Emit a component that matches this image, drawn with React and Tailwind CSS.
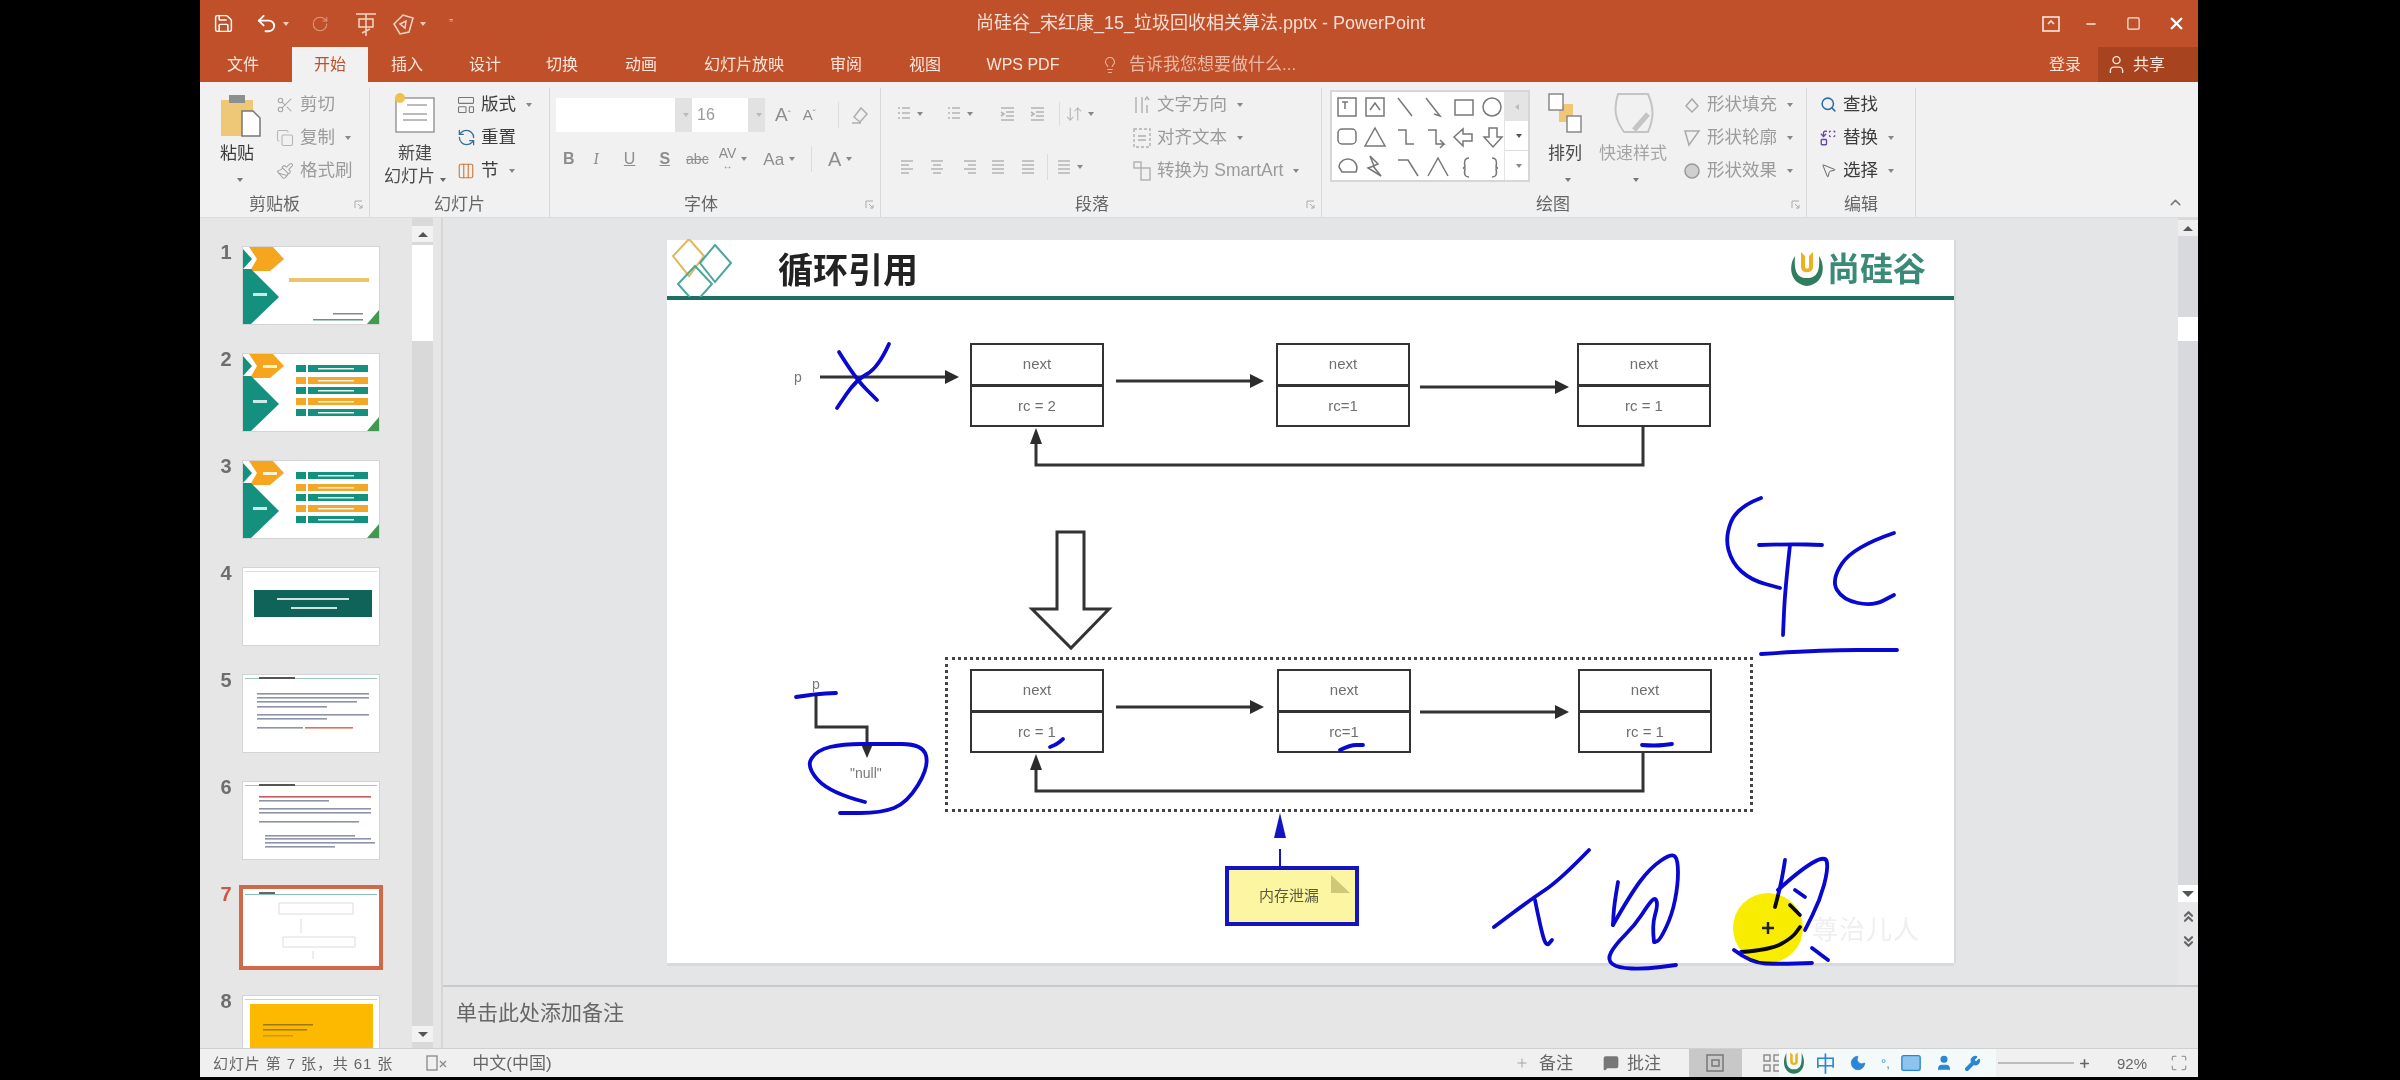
import React from 'react';
import { Save, Undo2, RotateCw, Scissors, Copy, Paintbrush, Lightbulb, User, Search, Replace, MousePointer2, ChevronUp, ChevronsUp, ChevronsDown, Plus, Minus, X, Square, LayoutTemplate, RefreshCcw, Columns3, Keyboard, Wrench, Moon, MessageSquare, ArrowDownUp, Maximize } from 'lucide-react';

const smooth = (pts) => {
  let d = `M${pts[0][0]} ${pts[0][1]}`;
  for (let i = 1; i < pts.length - 1; i++) {
    const mx = (pts[i][0] + pts[i + 1][0]) / 2;
    const my = (pts[i][1] + pts[i + 1][1]) / 2;
    d += ` Q${pts[i][0]} ${pts[i][1]} ${mx} ${my}`;
  }
  const l = pts[pts.length - 1];
  return d + ` L${l[0]} ${l[1]}`;
};

const INK = [
  [[889,344],[878,368],[856,380],[837,408]],
  [[839,352],[855,378],[877,400]],
  [[796,697],[815,694],[836,693]],
  [[865,802],[830,793],[806,767],[817,750],[843,744],[880,744],[923,744],[929,767],[907,803],[881,813],[840,813]],
  [[1050,747],[1056,745],[1063,739]],
  [[1340,750],[1350,745],[1363,745]],
  [[1642,745],[1655,746],[1672,744]],
  [[1761,498],[1737,507],[1725,537],[1732,563],[1751,580],[1780,588]],
  [[1759,545],[1790,544],[1822,545]],
  [[1790,545],[1785,590],[1783,635]],
  [[1894,533],[1853,547],[1831,580],[1843,600],[1873,606],[1894,595]],
  [[1761,654],[1819,650],[1897,650]],
  [[1589,850],[1560,880],[1530,900],[1494,927]],
  [[1535,900],[1540,925],[1546,947],[1552,940]],
  [[1618,882],[1614,905],[1613,925]],
  [[1613,925],[1630,895],[1650,868],[1672,853],[1678,860],[1678,885],[1672,915],[1660,940],[1655,942]],
  [[1654,942],[1652,925],[1658,905],[1655,897],[1648,905],[1635,925],[1615,945],[1607,960],[1618,968],[1645,969],[1676,965]],
  [[1785,860],[1782,880],[1775,907]],
  [[1778,890],[1800,870],[1826,855],[1828,870],[1820,900],[1805,930]],
  [[1795,890],[1805,897]],
  [[1790,905],[1800,915]],
  [[1741,952],[1770,950],[1792,938],[1800,927]],
  [[1734,950],[1751,963],[1780,964],[1812,963]],
  [[1812,948],[1828,960]],
];

const Box = ({ pos, rc }) => (
  <div className={`absolute w-[134px] h-[84px] border-2 border-[#333] bg-white flex flex-col text-[15px] text-[#6e6e6e] ${pos}`}>
    <div className="flex-1 flex items-center justify-center border-b-[3px] border-[#333]">next</div>
    <div className="flex-1 flex items-center justify-center">{rc}</div>
  </div>
);

const Slide = () => (
  <div className="relative w-[1287px] h-[723px] bg-white shrink-0 shadow-[0_3px_0_#d9d9d9,2px_0_0_#d9d9d9]">
    <div className="h-[60px] border-b-4 border-[#1d6f61] flex items-center">
      <svg width="70" height="58" viewBox="667 240 70 58" className="shrink-0" fill="none" strokeWidth="2">
        <path d="M689 240 L704 257 L689 277 L673 257 Z" stroke="#e3b75a" />
        <path d="M715 246 L731 264 L715 283 L700 264 Z" stroke="#4aa79a" />
        <path d="M695 267 L712 285 L695 304 L678 285 Z" stroke="#4aa79a" />
      </svg>
      <div className="ml-[41px] mt-[4px] text-[35px] font-bold text-[#222] leading-none">循环引用</div>
      <div className="ml-auto mr-[28px] mt-[2px] flex items-center gap-[1px]">
        <svg width="38" height="38" viewBox="0 0 38 38" fill="none">
          <path d="M7 6 C0 16 2 34 19 36 C36 34 38 16 31 6 C32 20 30 28 19 28 C8 28 6 20 7 6 Z" fill="#2f7d5e" />
          <path d="M13 2 L13 17 C13 24 25 24 25 17 L25 2 L21 6 L21 17 C21 19 17 19 17 17 L17 6 Z" fill="#eeb021" />
        </svg>
        <span className="text-[33px] font-bold text-[#3b8a78] leading-none">尚硅谷</span>
      </div>
    </div>

    <Box pos="left-[303px] top-[103px]" rc="rc = 2" />
    <Box pos="left-[609px] top-[103px]" rc="rc=1" />
    <Box pos="left-[910px] top-[103px]" rc="rc = 1" />
    <Box pos="left-[303px] top-[429px]" rc="rc = 1" />
    <Box pos="left-[610px] top-[429px]" rc="rc=1" />
    <Box pos="left-[911px] top-[429px]" rc="rc = 1" />

    <div className="absolute left-[278px] top-[417px] w-[808px] h-[155px] border-[3px] border-dotted border-[#444]" />
    <span className="absolute left-[127px] top-[127px] text-[14px] text-[#777]">p</span>
    <span className="absolute left-[145px] top-[434px] text-[14px] text-[#777]">p</span>
    <span className="absolute left-[183px] top-[523px] text-[14px] text-[#777]">"null"</span>

    <div className="absolute left-[558px] top-[626px] w-[134px] h-[60px] border-4 border-[#1414c0] bg-[#fcf6a2] flex items-center justify-center text-[15px] text-[#5a5a3a]">
      <span className="mr-[6px]">内存泄漏</span>
    </div>
    <div className="absolute left-[1145px] top-[677px] text-[26px] tracking-[1px] text-[#efefef] leading-none">尊治儿人</div>

    <svg className="absolute inset-0 overflow-visible" width="1288" height="723" viewBox="667 240 1288 723" fill="none">
      <g stroke="#333" strokeWidth="3">
        <path d="M820 377 H948" /><path d="M1116 381 H1253" /><path d="M1420 387 H1558" />
        <path d="M1643 427 V465 H1036 V438" />
        <path d="M1116 707 H1253" /><path d="M1420 712 H1558" />
        <path d="M1643 753 V791 H1036 V764" />
        <path d="M816 695 V727 H867 V745" />
        <path d="M1057 609 V532 H1084 V609 H1109 L1071 648 L1032 609 Z" fill="#fff" />
      </g>
      <g fill="#2c2c2c">
        <path d="M959 377 L945 370 V384 Z" /><path d="M1264 381 L1250 374 V388 Z" /><path d="M1569 387 L1555 380 V394 Z" />
        <path d="M1264 707 L1250 700 V714 Z" /><path d="M1569 712 L1555 705 V719 Z" />
        <path d="M1036 428 L1030 444 H1042 Z" /><path d="M1036 754 L1030 770 H1042 Z" />
        <path d="M867 758 L861 744 H873 Z" />
      </g>
      <path d="M1331 875 L1350 893 H1331 Z" fill="#cfc878" />
      <path d="M1280 813 L1274 838 H1286 Z" fill="#1414c0" />
      <path d="M1280 849 V866" stroke="#1414c0" strokeWidth="2" />
      <g stroke="#0808d0" strokeWidth="3.8" strokeLinecap="round" strokeLinejoin="round">
        {INK.map((p, i) => <path key={i} d={smooth(p)} />)}
      </g>
      <circle cx="1768" cy="928" r="35" fill="#f8ec00" className="mix-blend-multiply" />
      <path d="M1762 928 H1774 M1768 922 V934" stroke="#222" strokeWidth="2.5" />
    </svg>
  </div>
);

const Corner = () => (
  <g>
    <path d="M124 77 L136 63 V77 Z" fill="#3f9a4f" />
  </g>
);
const Arrowhead = () => (
  <g>
    <path d="M0 0 H30 L41 12 L27 24 H7 L14 12 L6 0 Z" fill="#f5a51e" />
    <path d="M0 2 L9 12 L0 22 Z" fill="#14907f" />
    <path d="M0 22 H8 L36 50 L8 77 H0 Z" fill="#14907f" />
    <rect x="10" y="46" width="14" height="3" fill="#cfe9e4" />
  </g>
);
const Rows = () => (
  <g>
    {[11, 23, 33, 44, 55].map((y, i) => (
      <g key={y}>
        <rect x="53" y={y} width="10" height="7" fill={i % 2 ? '#f2a728' : '#14907f'} />
        <rect x="65" y={y} width="60" height="7" fill={i % 2 ? '#f2a728' : '#14907f'} />
        <rect x="75" y={y + 3} width="36" height="1.5" fill="#e8f3ee" />
      </g>
    ))}
  </g>
);
const Lines = ({ rows }) => (
  <g>
    <rect x="2" y="3" width="132" height="1" fill="#9cc9bf" />
    <rect x="16" y="2" width="36" height="2" fill="#555" />
    {rows.map((r, i) => <rect key={i} x={r[0]} y={r[1]} width={r[2]} height="1.6" fill={r[3] || '#8e93a8'} />)}
  </g>
);

const THUMBS = [
  <g key="1"><Arrowhead /><rect x="46" y="31" width="80" height="4" fill="#edc46a" /><rect x="90" y="66" width="30" height="1.5" fill="#888" /><rect x="70" y="72" width="50" height="1.5" fill="#5a9a80" /><Corner /></g>,
  <g key="2"><Arrowhead /><rect x="20" y="11" width="14" height="3" fill="#fff3d6" /><Rows /><Corner /></g>,
  <g key="3"><Arrowhead /><rect x="20" y="11" width="14" height="3" fill="#fff3d6" /><Rows /><Corner /></g>,
  <g key="4"><rect x="2" y="3" width="132" height="1" fill="#cfe4df" /><rect x="11" y="22" width="118" height="27" fill="#0f6358" /><rect x="34" y="30" width="72" height="2" fill="#cfe4df" /><rect x="48" y="39" width="46" height="2" fill="#cfe4df" /></g>,
  <Lines key="5" rows={[[14,18,112],[14,22,112],[14,26,100],[14,31,70],[14,39,112],[14,43,70],[14,52,46],[62,52,48,'#e0705a']]} />,
  <Lines key="6" rows={[[16,14,112,'#cc5a62'],[16,18,70],[16,26,112],[16,30,112],[16,39,100],[22,53,90],[22,56,106],[22,60,110],[22,64,70]]} />,
  <g key="7"><rect x="2" y="5" width="132" height="1" fill="#8cc0b5" /><rect x="16" y="3" width="16" height="2" fill="#666" /><path d="M36 14 H110 M36 25 H110 M40 48 H112 M40 58 H112 M36 14 V25 M110 14 V25 M40 48 V58 M112 48 V58 M58 30 V44 M70 62 V70" stroke="#dcdcdc" strokeWidth="1" fill="none" /></g>,
  <g key="8"><rect x="2" y="3" width="132" height="1" fill="#bcd8d0" /><rect x="7" y="8" width="123" height="69" fill="#fdb900" /><rect x="20" y="28" width="50" height="1.5" fill="#9a7a10" /><rect x="20" y="33" width="44" height="1.5" fill="#9a7a10" /><rect x="20" y="39" width="30" height="1.5" fill="#c7981a" /></g>,
];

const ThumbPanel = () => (
  <div className="w-[243px] h-full flex bg-[#e6e6e6] border-r-2 border-[#d6d6d6] shrink-0">
    <div className="w-[212px] h-full overflow-hidden pt-[29px]">
      {THUMBS.map((t, i) => (
        <div key={i} className="h-[107px] flex pl-[17px]">
          <div className={`w-[26px] -mt-[5px] text-[20px] font-bold leading-none pr-[8px] text-center ${i === 6 ? 'text-[#c9583c]' : 'text-[#6e6e6e]'}`}>{i + 1}</div>
          <svg width="136" height="77" viewBox="0 0 136 77" className={`bg-white shrink-0 ${i === 6 ? 'outline-4 outline-[#d0694a]' : 'outline-1 outline-[#d4d4d4]'}`}>{t}</svg>
        </div>
      ))}
    </div>
    <div className="w-[21px] h-full bg-[#d9d9d9] flex flex-col pt-[8px] pb-[6px]">
      <div className="h-[16px] bg-[#f2f2f2] flex items-center justify-center"><div className="w-0 h-0 border-x-[5px] border-x-transparent border-b-[5px] border-b-[#555]" /></div>
      <div className="h-[96px] mt-[3px] bg-white" />
      <div className="flex-1" />
      <div className="h-[16px] bg-[#f2f2f2] flex items-center justify-center"><div className="w-0 h-0 border-x-[5px] border-x-transparent border-t-[5px] border-t-[#555]" /></div>
    </div>
  </div>
);

const Caret = ({ c = 'border-t-[#888]' }) => <span className={`inline-block w-0 h-0 border-x-[3px] border-x-transparent border-t-[4px] ${c} ml-[5px]`} />;

const Small = ({ icon, text, caret, dark }) => (
  <div className={`h-[33px] flex items-center gap-[5px] text-[17.5px] leading-none whitespace-nowrap ${dark ? 'text-[#3c3c3c]' : 'text-[#9b9b9b]'}`}>
    <span className="w-[20px] flex justify-center shrink-0">{icon}</span>
    <span>{text}</span>
    {caret && <Caret />}
  </div>
);

const Group = ({ w, label, children, launcher, lw = '' }) => (
  <div className={`${w} h-full shrink-0 flex flex-col border-r border-[#d8d8d8] relative`}>
    <div className="h-[102px] flex">{children}</div>
    <div className={`flex-1 flex items-center justify-center text-[17px] text-[#666] leading-none pt-[2px] ${lw}`}>{label}</div>
    {launcher && <svg className="absolute right-[6px] bottom-[8px]" width="9" height="9" viewBox="0 0 9 9" fill="none" stroke="#aaa"><path d="M1 8 V1 H8 M4 4 L8 8 M8 5 V8 H5" /></svg>}
  </div>
);

const Big = ({ w, ml, icon, l1, l2, caret, c = 'text-[#4a4a4a]' }) => (
  <div className={`${w} ${ml} flex flex-col items-center text-[17px] leading-none ${c}`}>
    <div className="h-[50px] flex items-start justify-center pt-[4px]">{icon}</div>
    <div className="mt-[7px]">{l1}</div>
    {l2 && <div className="mt-[6px] whitespace-nowrap">{l2}{caret && <Caret c="border-t-[#666]" />}</div>}
    {!l2 && caret && <div className="mt-[6px]"><Caret c="border-t-[#777]" /></div>}
  </div>
);

const LinesIcon = ({ kind }) => {
  const map = {
    left: 'M1 2 H13 M1 6 H9 M1 10 H13 M1 14 H9',
    center: 'M1 2 H13 M3 6 H11 M1 10 H13 M3 14 H11',
    right: 'M1 2 H13 M5 6 H13 M1 10 H13 M5 14 H13',
    just: 'M1 2 H13 M1 6 H13 M1 10 H13 M1 14 H13',
    bullet: 'M1 2 H3 M5 2 H13 M1 7 H3 M5 7 H13 M1 12 H3 M5 12 H13',
    indent: 'M1 2 H14 M6 6 H14 M6 10 H14 M1 14 H14 M1 6 L4 8 L1 10',
  };
  return <svg width="16" height="16" viewBox="0 0 14 16" fill="none" stroke="#b4b4b4" strokeWidth="1.6"><path d={map[kind]} /></svg>;
};

const ic = { size: 18, strokeWidth: 1.4 };

const Gallery = () => (
  <div className="w-[200px] h-[92px] mt-[2px] ml-[8px] flex border-2 border-[#d6d6d6] bg-white shrink-0">
    <svg width="172" height="88" viewBox="0 0 172 88" fill="none" stroke="#777" strokeWidth="1.5" className="shrink-0">
      <rect x="6" y="6" width="18" height="18" /><path d="M10 10 H16 M13 10 V17" />
      <rect x="34" y="6" width="18" height="18" /><path d="M38 18 L43 11 L48 18" />
      <path d="M66 6 L80 24 M94 6 L108 24 L102 22" />
      <rect x="123" y="8" width="18" height="15" />
      <circle cx="160" cy="15" r="9" />
      <rect x="6" y="37" width="18" height="15" rx="4" />
      <path d="M43 36 L53 54 H33 Z" />
      <path d="M66 38 H74 V52 H82 M96 38 H104 V52 H112 L108 48 M108 56 L112 52" />
      <path d="M122 45 L131 37 V42 H140 V49 H131 V54 Z" />
      <path d="M157 36 H165 V45 H170 L161 55 L152 45 H157 Z" />
      <path d="M7 75 A9 9 0 1 1 24 80 H10 Z" />
      <path d="M38 64 L46 72 L41 74 L49 84 L36 76 L42 74 Z" />
      <path d="M66 68 H76 L86 84 M96 84 L106 66 L116 84" />
      <path d="M137 66 Q131 66 133 75 Q130 76 133 77 Q131 85 137 85 M160 66 Q166 66 164 75 Q167 76 164 77 Q166 85 160 85" />
    </svg>
    <div className="flex-1 flex flex-col border-l border-[#e4e4e4] items-center text-[#666]">
      <div className="flex-1 w-full bg-[#e4e4e4] flex items-center justify-center"><div className="w-0 h-0 border-y-[3px] border-y-transparent border-r-[4px] border-r-[#bbb]" /></div>
      <div className="flex-1 w-full flex items-center justify-center"><Caret c="border-t-[#555]" /></div>
      <div className="flex-1 w-full flex items-center justify-center border-t border-[#ddd]"><Caret c="border-t-[#888]" /></div>
    </div>
  </div>
);

const Ribbon = () => (
  <div className="h-[136px] bg-[#f1f1f1] flex pt-[6px] border-b border-[#dcdcdc] shrink-0">
    <Group w="w-[170px]" label="剪贴板" launcher lw="pr-[20px]">
      <Big w="w-[54px]" ml="ml-[10px]" c="text-[#3c3c3c]" l1="粘贴" caret icon={
        <svg className="ml-[8px]" width="42" height="46" viewBox="0 0 42 46" fill="none">
          <rect x="1" y="8" width="32" height="36" fill="#eec877" />
          <rect x="9" y="3" width="16" height="8" fill="#8a8f8f" />
          <path d="M22 19 H33 L40 26 V44 H22 Z" fill="#fff" stroke="#777" strokeWidth="1.5" />
        </svg>
      } />
      <div className="ml-[11px] flex flex-col">
        <Small icon={<Scissors {...ic} color="#a5a5a5" />} text="剪切" />
        <Small icon={<Copy {...ic} color="#b5b5b5" />} text="复制" caret />
        <Small icon={<Paintbrush {...ic} color="#a5a5a5" />} text="格式刷" />
      </div>
    </Group>
    <Group w="w-[180px]" label="幻灯片">
      <Big w="w-[62px]" ml="ml-[14px]" l1="新建" l2="幻灯片" caret icon={
        <svg width="44" height="44" viewBox="0 0 44 44" fill="none">
          <rect x="3" y="6" width="38" height="34" fill="#fff" stroke="#999" strokeWidth="1.5" />
          <path d="M10 22 H34 M10 28 H34 M14 13 H34" stroke="#bbb" strokeWidth="2" />
          <circle cx="7" cy="6" r="5" fill="#f0c24b" />
        </svg>
      } />
      <div className="ml-[10px] flex flex-col">
        <Small dark icon={<LayoutTemplate size={20} strokeWidth={1.3} color="#777" />} text="版式" caret />
        <Small dark icon={<RefreshCcw size={19} strokeWidth={1.6} color="#2f6f9a" />} text="重置" />
        <Small dark icon={<Columns3 size={18} strokeWidth={1.5} color="#c97a3c" />} text="节" caret />
      </div>
    </Group>
    <Group w="w-[331px]" label="字体" launcher lw="pr-[28px]">
      <div className="pl-[6px] pt-[9px] flex flex-col text-[#8d8d8d]">
        <div className="flex items-center h-[35px]">
          <div className="w-[119px] h-[34px] bg-white" />
          <div className="w-[17px] h-[34px] bg-[#e2e2e2] flex items-center justify-center"><Caret c="border-t-[#bbb]" /></div>
          <div className="w-[56px] h-[34px] bg-white pl-[5px] text-[16px] leading-[34px] text-[#9a9a9a]">16</div>
          <div className="w-[17px] h-[34px] bg-[#e2e2e2] flex items-center justify-center"><Caret c="border-t-[#bbb]" /></div>
          <span className="ml-[10px] text-[19px] leading-none">A<sup className="text-[9px]">ˆ</sup></span>
          <span className="ml-[12px] text-[15px] leading-none">A<sup className="text-[9px]">ˇ</sup></span>
          <span className="ml-[22px] w-[1px] h-[26px] bg-[#dcdcdc]" />
          <svg className="ml-[12px]" width="18" height="20" viewBox="0 0 18 20" fill="none" stroke="#b0b0b0" strokeWidth="1.6"><path d="M3 12 L10 3 L16 9 L9 17 Z M1 18 H10" /></svg>
        </div>
        <div className="flex items-center h-[32px] mt-[11px] text-[16px] leading-none">
          <b className="ml-[7px]">B</b>
          <i className="ml-[19px] font-serif">I</i>
          <u className="ml-[25px]">U</u>
          <u className="ml-[24px] font-bold">S</u>
          <s className="ml-[16px] text-[14px]">abc</s>
          <span className="ml-[10px] text-[14px] leading-[11px] text-center">AV<br /><span className="text-[10px]">↔</span></span>
          <Caret />
          <span className="ml-[16px] text-[17px]">Aa</span>
          <Caret />
          <span className="ml-[16px] w-[1px] h-[26px] bg-[#dcdcdc]" />
          <span className="ml-[16px] text-[20px]">A</span>
          <Caret />
        </div>
      </div>
    </Group>
    <Group w="w-[441px]" label="段落" launcher lw="pr-[18px]">
      <div className="pl-[15px] pt-[9px] flex flex-col w-[250px]">
        <div className="flex items-center h-[33px]">
          <LinesIcon kind="bullet" /><Caret />
          <span className="ml-[23px]"><LinesIcon kind="bullet" /></span><Caret />
          <span className="ml-[26px]"><LinesIcon kind="indent" /></span>
          <span className="ml-[14px]"><LinesIcon kind="indent" /></span>
          <span className="ml-[14px] w-[1px] h-[24px] bg-[#dcdcdc]" />
          <ArrowDownUp className="ml-[5px]" size={18} strokeWidth={1.4} color="#b0b0b0" /><Caret />
        </div>
        <div className="flex items-center h-[33px] mt-[20px]">
          <span className="ml-[3px]"><LinesIcon kind="left" /></span>
          <span className="ml-[14px]"><LinesIcon kind="center" /></span>
          <span className="ml-[17px]"><LinesIcon kind="right" /></span>
          <span className="ml-[12px]"><LinesIcon kind="just" /></span>
          <span className="ml-[14px]"><LinesIcon kind="just" /></span>
          <span className="ml-[11px] w-[1px] h-[26px] bg-[#dcdcdc]" />
          <span className="ml-[8px]"><LinesIcon kind="just" /></span><Caret />
        </div>
      </div>
      <div className="flex flex-col ml-[1px]">
        <Small icon={<svg width="18" height="20" viewBox="0 0 18 20" fill="none" stroke="#b0b0b0" strokeWidth="1.4"><path d="M3 2 V18 M9 2 V18 M14 10 V18 M12 5 L14 2 L16 5" /></svg>} text="文字方向" caret />
        <Small icon={<svg width="18" height="20" viewBox="0 0 18 20" fill="none" stroke="#b0b0b0" strokeWidth="1.4"><rect x="1" y="1" width="16" height="18" strokeDasharray="3 2" /><path d="M5 8 H13 M5 12 H13" /></svg>} text="对齐文本" caret />
        <Small icon={<svg width="18" height="20" viewBox="0 0 18 20" fill="none" stroke="#b0b0b0" strokeWidth="1.4"><rect x="1" y="1" width="7" height="6" /><rect x="8" y="7" width="9" height="12" /></svg>} text="转换为 SmartArt" caret />
      </div>
    </Group>
    <Group w="w-[485px]" label="绘图" launcher lw="pr-[22px]">
      <Gallery />
      <Big w="w-[44px]" ml="ml-[13px]" l1="排列" caret icon={
        <svg width="36" height="42" viewBox="0 0 36 42" fill="none">
          <rect x="12" y="12" width="14" height="18" fill="#eec877" />
          <rect x="2" y="2" width="14" height="16" fill="#fff" stroke="#888" strokeWidth="1.5" />
          <rect x="20" y="24" width="14" height="16" fill="#fff" stroke="#888" strokeWidth="1.5" />
        </svg>
      } />
      <Big w="w-[76px]" ml="ml-[8px]" c="text-[#a5a5a5]" l1="快速样式" caret icon={
        <svg width="46" height="44" viewBox="0 0 46 44" fill="none" stroke="#c4c4c4" strokeWidth="2"><path d="M8 2 H38 C44 16 44 26 38 40 H14 C4 26 4 16 8 2 Z" /><path d="M24 38 L38 22" strokeWidth="5" /></svg>
      } />
      <div className="flex flex-col ml-[11px]">
        <Small icon={<svg width="18" height="18" viewBox="0 0 18 18" fill="none" stroke="#aaa" strokeWidth="1.5"><path d="M3 10 L9 3 L15 10 L9 16 Z" /></svg>} text="形状填充" caret />
        <Small icon={<svg width="18" height="18" viewBox="0 0 18 18" fill="none" stroke="#aaa" strokeWidth="1.5"><path d="M2 2 H16 L6 16 Z" /></svg>} text="形状轮廓" caret />
        <Small icon={<svg width="18" height="18" viewBox="0 0 18 18" fill="#cfcfcf" stroke="#999" strokeWidth="1.5"><circle cx="9" cy="9" r="7" /></svg>} text="形状效果" caret />
      </div>
    </Group>
    <Group w="w-[109px]" label="编辑">
      <div className="flex flex-col pl-[11px]">
        <Small dark icon={<Search size={17} strokeWidth={2.2} color="#2b6ca8" />} text="查找" />
        <Small dark icon={<Replace size={18} strokeWidth={1.8} color="#6a4aa0" />} text="替换" caret />
        <Small dark icon={<MousePointer2 size={17} strokeWidth={1.4} color="#666" />} text="选择" caret />
      </div>
    </Group>
    <div className="flex-1 flex items-end justify-end pr-[14px] pb-[6px]"><ChevronUp size={17} color="#777" /></div>
  </div>
);

const TABS = [
  ['w-[76px] ml-[5px]', '文件'], ['w-[76px] ml-[11px]', '开始'], ['w-[78px]', '插入'], ['w-[78px]', '设计'], ['w-[76px]', '切换'], ['w-[82px]', '动画'],
  ['w-[124px]', '幻灯片放映'], ['w-[80px]', '审阅'], ['w-[78px]', '视图'], ['w-[118px]', 'WPS PDF'],
];

const RightScroll = () => (
  <div className="w-[20px] h-full bg-[#e8e8ea] flex flex-col items-center shrink-0">
    <div className="w-full h-[667px] bg-[#d8d9dc] flex flex-col">
      <div className="w-full h-[16px] bg-[#eeeeee] mt-[2px] flex items-center justify-center"><div className="w-0 h-0 border-x-[5px] border-x-transparent border-b-[5px] border-b-[#555]" /></div>
      <div className="w-full h-[24px] mt-[81px] bg-white" />
    </div>
    <div className="w-full h-[17px] bg-white flex items-center justify-center"><div className="w-0 h-0 border-x-[6px] border-x-transparent border-t-[6px] border-t-[#555]" /></div>
    <ChevronsUp className="mt-[6px]" size={17} strokeWidth={3} color="#666" />
    <ChevronsDown className="mt-[8px]" size={17} strokeWidth={3} color="#666" />
  </div>
);

export default function App() {
  return (
    <div className="w-[2400px] h-[1080px] bg-black overflow-hidden font-['Liberation_Sans','Noto_Sans_CJK_SC',sans-serif]">
      <div className="ml-[200px] w-[1998px] h-[1077px] flex flex-col overflow-hidden blur-[0.7px] bg-[#e6e6e6]">
        {/* Title bar */}
        <div className="h-[47px] bg-[#c0502a] flex items-center shrink-0 relative text-[#f7ded4]">
          <Save className="ml-[13px]" size={21} strokeWidth={1.7} color="#fff" />
          <Undo2 className="ml-[21px]" size={23} strokeWidth={2} color="#fff" />
          <Caret c="border-t-[#f3c9b8]" />
          <RotateCw className="ml-[22px]" size={18} strokeWidth={1.4} color="#dd9a80" />
          <svg className="ml-[25px]" width="24" height="26" viewBox="0 0 24 26" fill="none" stroke="#f3d5c8" strokeWidth="1.5"><path d="M2 3 H22 M5 8 H19 V16 H5 Z M12 3 V25 M8 22 L16 18" /></svg>
          <svg className="ml-[13px]" width="24" height="24" viewBox="0 0 24 24" fill="none" stroke="#f3d5c8" strokeWidth="1.5"><path d="M3 12 L12 3 L22 6 L18 20 L9 22 Z M9 12 L15 9 L14 16 Z" /></svg>
          <Caret c="border-t-[#f3c9b8]" />
          <span className="ml-[23px] text-[13px] leading-none text-[#f3c9b8]">⁼</span>
          <div className="absolute left-[776px] top-[14px] text-[18px] leading-none whitespace-nowrap">尚硅谷_宋红康_15_垃圾回收相关算法.pptx - PowerPoint</div>
          <div className="ml-auto flex items-center">
            <svg width="18" height="18" viewBox="0 0 18 18" fill="none" stroke="#fbe6dd" strokeWidth="1.6"><rect x="1" y="2" width="16" height="14" /><path d="M6 9 L9 6 L12 9" /></svg>
            <Minus className="ml-[24px]" size={14} strokeWidth={2.5} color="#fbe6dd" />
            <Square className="ml-[28px]" size={15} strokeWidth={2} color="#fbe6dd" />
            <X className="ml-[26px] mr-[12px]" size={19} strokeWidth={3} color="#fff" />
          </div>
        </div>
        {/* Tabs */}
        <div className="h-[35px] bg-[#c0502a] flex items-stretch shrink-0 text-[16px] text-[#fbe6dd]">
          {TABS.map(([w, t]) => (
            <div key={t} className={`${w} flex items-center justify-center ${t === '开始' ? 'bg-[#f1f1f1] text-[#c0502a]' : ''}`}>{t}</div>
          ))}
          <div className="flex items-center ml-[19px] text-[17px] text-[#e9b9a5]">
            <Lightbulb size={18} strokeWidth={1.4} />
            <span className="ml-[10px]">告诉我您想要做什么...</span>
          </div>
          <div className="ml-auto flex items-stretch">
            <div className="flex items-center mr-[17px]">登录</div>
            <div className="w-[100px] bg-[#a8431f] flex items-center gap-[6px] pl-[8px]"><User size={21} strokeWidth={1.6} /><span>共享</span></div>
          </div>
        </div>
        <Ribbon />
        {/* Main */}
        <div className="flex-1 flex min-h-0">
          <ThumbPanel />
          <div className="flex-1 flex flex-col min-w-0">
            <div className="flex-1 flex min-h-0 bg-[#e4e5e7]">
              <div className="flex-1 pl-[224px] pt-[22px] min-w-0"><Slide /></div>
              <RightScroll />
            </div>
            <div className="h-[63px] border-t-2 border-[#c9c9c9] bg-[#e6e6e6] flex items-center pl-[13px] pb-[11px] text-[21px] text-[#666] leading-none shrink-0">单击此处添加备注</div>
          </div>
        </div>
        {/* Status */}
        <div className="h-[29px] bg-[#f0f0f0] border-t border-[#d0d0d0] flex items-center text-[15px] text-[#666] leading-none shrink-0 whitespace-nowrap">
          <span className="ml-[13px] tracking-[0.9px]">幻灯片 第 7 张，共 61 张</span>
          <svg className="ml-[33px]" width="22" height="18" viewBox="0 0 22 18" fill="none" stroke="#888" strokeWidth="1.3"><rect x="1" y="2" width="10" height="14" /><path d="M14 7 L20 13 M20 7 L14 13" /></svg>
          <span className="ml-[24px] text-[17px]">中文(中国)</span>
          <div className="ml-auto flex items-center h-full">
            <Plus size={14} strokeWidth={1.5} color="#999" />
            <span className="ml-[10px] text-[17px]">备注</span>
            <MessageSquare className="ml-[30px]" size={16} fill="#777" color="#777" />
            <span className="ml-[8px] text-[17px]">批注</span>
            <div className="ml-[28px] w-[53px] h-full bg-[#c8c8c8] flex items-center justify-center"><svg width="18" height="18" viewBox="0 0 18 18" fill="none" stroke="#777" strokeWidth="1.5"><rect x="1" y="1" width="16" height="16" /><rect x="6" y="6" width="7" height="6" /></svg></div>
            <svg className="ml-[21px]" width="18" height="18" viewBox="0 0 18 18" fill="none" stroke="#888" strokeWidth="1.4"><rect x="1" y="1" width="6" height="6" /><rect x="11" y="1" width="6" height="6" /><rect x="1" y="11" width="6" height="6" /><rect x="11" y="11" width="6" height="6" /></svg>
            <div className="w-[217px] h-full bg-[#f4fafa] flex items-center pl-[3px] -ml-[2px] text-[#2a86d6] text-[21px]">
              <svg width="24" height="26" viewBox="0 0 38 38" fill="none"><path d="M7 3 C0 16 2 34 19 36 C36 34 38 16 31 3 C32 20 30 29 19 29 C8 29 6 20 7 3 Z" fill="#2f7d5e" /><path d="M13 2 V17 C13 24 25 24 25 17 V2 L21 6 V17 C21 19 17 19 17 17 V6 Z" fill="#eeb021" /></svg>
              <span className="ml-[9px] leading-none">中</span>
              <Moon className="ml-[13px]" size={18} fill="#2a86d6" strokeWidth={1} />
              <span className="ml-[14px] text-[13px] leading-none text-[#3a8fd8]">°,</span>
              <Keyboard className="ml-[10px]" size={22} strokeWidth={1.5} fill="#8cc4ee" />
              <User className="ml-[13px]" size={18} fill="#2a86d6" strokeWidth={1.5} />
              <Wrench className="ml-[11px]" size={17} fill="#2a86d6" strokeWidth={1.5} />
            </div>
            <div className="ml-[2px] w-[76px] h-[2px] bg-[#bcbcbc]" />
            <Plus className="ml-[4px]" size={13} strokeWidth={3} color="#666" />
            <span className="ml-[26px]">92%</span>
            <Maximize className="ml-[23px] mr-[10px]" size={18} strokeWidth={1.4} color="#888" />
          </div>
        </div>
      </div>
    </div>
  );
}
